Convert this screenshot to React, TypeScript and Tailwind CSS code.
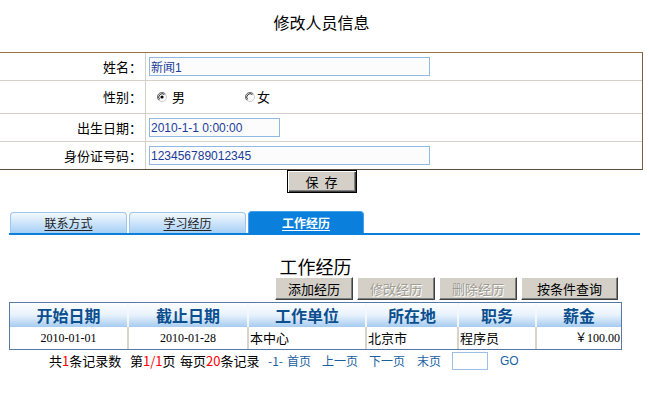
import React from 'react'

const cjk = "[font-family:'Noto_Sans_CJK_SC',sans-serif]"

function Radio({ checked }: { checked?: boolean }) {
  return (
    <svg width="10" height="10" viewBox="0 0 10 10" className="shrink-0">
      <circle cx="5" cy="5" r="4.5" fill="#fff" stroke="#c8c8c8" />
      <path d="M8.2 1.8 A4.5 4.5 0 0 0 1.8 8.2" fill="none" stroke="#707070" />
      <path d="M7.4 2.6 A3.4 3.4 0 0 0 2.6 7.4" fill="none" stroke="#303030" />
      {checked ? <circle cx="5" cy="5" r="1.6" fill="#000" /> : null}
    </svg>
  )
}

function FormRow({
  label,
  children,
  h,
  last,
}: {
  label: string
  children: React.ReactNode
  h: string
  last?: boolean
}) {
  return (
    <div className={`flex ${h} ${last ? '' : 'border-b border-[#d4d0c8]'}`}>
      <div className="w-[146px] shrink-0 border-r border-[#d4d0c8] flex items-center justify-end pr-[3px] text-[13px] text-black">
        {label}
      </div>
      <div className="flex-1 flex items-center pl-[3px]">{children}</div>
    </div>
  )
}

function TextBox({ value, w }: { value: string; w: string }) {
  return (
    <input
      readOnly
      value={value}
      className={`${w} h-[19px] border border-[#8fb9e3] bg-[#fcfcfc] px-[1px] text-[12px] text-[#1a3d99] outline-none [font-family:'Liberation_Sans','Noto_Sans_CJK_SC',sans-serif]`}
    />
  )
}

function OldButton({
  children,
  w,
  disabled,
}: {
  children: React.ReactNode
  w: string
  disabled?: boolean
}) {
  return (
    <button
      type="button"
      className={`${w} h-[23px] bg-[#d4d0c8] border border-t-white border-l-white border-r-[#404040] border-b-[#404040] shadow-[inset_-1px_-1px_0_#808080] flex items-center justify-center text-[13px] leading-none ${
        disabled ? 'text-[#a09c94] [text-shadow:1px_1px_0_#fff]' : 'text-black'
      }`}
    >
      {children}
    </button>
  )
}

const columns = ['开始日期', '截止日期', '工作单位', '所在地', '职务', '薪金']

export default function App() {
  return (
    <div className={`w-[649px] h-[409px] bg-white overflow-hidden ${cjk}`}>
      <div className="w-[643px] h-[52px] pt-[12px] text-center text-[16px] leading-[20px] text-black">
        修改人员信息
      </div>

      <div className="w-[643px] border-t border-b border-r border-t-[#9a7447] border-b-[#5e4c3a] border-r-[#7b5e40]">
        <FormRow label="姓名：" h="h-[28px]">
          <TextBox value="新闻1" w="w-[281px]" />
        </FormRow>
        <FormRow label="性别：" h="h-[33px]">
          <label className="ml-[8px] flex items-center gap-[5px] text-[13px]">
            <Radio checked />
            男
          </label>
          <label className="ml-[60px] flex items-center gap-[2px] text-[13px]">
            <Radio />
            女
          </label>
        </FormRow>
        <FormRow label="出生日期：" h="h-[28px]">
          <TextBox value="2010-1-1 0:00:00" w="w-[131px]" />
        </FormRow>
        <FormRow label="身份证号码：" h="h-[27px]" last>
          <TextBox value="123456789012345" w="w-[281px]" />
        </FormRow>
      </div>

      <div className="w-[643px]">
        <button
          type="button"
          className="mx-auto block w-[70px] h-[23px] bg-[#d4d0c8] border border-black shadow-[inset_1px_1px_0_#fff,inset_-1px_-1px_0_#404040,inset_-2px_-2px_0_#808080] text-[13px] leading-none tracking-[6px] pl-[6px]"
        >
          保存
        </button>
      </div>

      <div className="mt-[18px] ml-[9px] w-[631px] h-[24px] flex items-end border-b-2 border-[#0a7fdc]">
        <div className="ml-[1px] w-[117px] h-[21px] rounded-t-[4px] border border-b-0 border-[#9cc6ee] bg-linear-to-b from-[#f4f9fe] to-[#a6cff5] flex items-center justify-center text-[12px] text-[#222] underline underline-offset-2">
          联系方式
        </div>
        <div className="ml-[2px] w-[117px] h-[21px] rounded-t-[4px] border border-b-0 border-[#9cc6ee] bg-linear-to-b from-[#f4f9fe] to-[#a6cff5] flex items-center justify-center text-[12px] text-[#222] underline underline-offset-2">
          学习经历
        </div>
        <div className="ml-[2px] w-[116px] h-[22px] rounded-t-[4px] border border-b-0 border-[#4aa0e8] bg-[#0a7fdc] flex items-center justify-center text-[12px] font-bold text-white underline underline-offset-2">
          工作经历
        </div>
      </div>

      <div className="ml-[9px] w-[613px]">
        <div className="mt-[21px] h-[21px] text-center text-[18px] leading-[21px] text-black">工作经历</div>

        <div className="flex justify-end gap-[4px] pr-[4px]">
          <OldButton w="w-[78px]">添加经历</OldButton>
          <OldButton w="w-[78px]" disabled>
            修改经历
          </OldButton>
          <OldButton w="w-[78px]" disabled>
            删除经历
          </OldButton>
          <OldButton w="w-[97px]">按条件查询</OldButton>
        </div>

        <div className="mt-[2px] border border-[#5879a8]">
          <div className="grid grid-cols-[117px_120px_118px_92px_78px_86px] h-[24px] bg-linear-to-b from-[#fdfeff] via-[#e8f2fc] to-[#a6ccf0]">
            {columns.map((c, i) => (
              <div
                key={c}
                className={`flex items-center justify-center text-[16px] font-bold text-[#0c4f8e] ${
                  i > 0 ? 'border-l-2 border-[#f4f8fc]' : ''
                }`}
              >
                {c}
              </div>
            ))}
          </div>
          <div className="grid grid-cols-[117px_120px_118px_92px_78px_86px] h-[22px] text-[13px] text-black">
            <div className="flex items-center justify-center text-[12px] [font-family:'Liberation_Serif',serif]">
              2010-01-01
            </div>
            <div className="flex items-center justify-center border-l-2 border-[#d8d4cc] text-[12px] [font-family:'Liberation_Serif',serif]">
              2010-01-28
            </div>
            <div className="flex items-center pl-[1px] border-l-2 border-[#d8d4cc]">本中心</div>
            <div className="flex items-center pl-[1px] border-l-2 border-[#d8d4cc]">北京市</div>
            <div className="flex items-center pl-[1px] border-l-2 border-[#d8d4cc]">程序员</div>
            <div className="flex items-center justify-end pr-[1px] border-l-2 border-[#d8d4cc] text-[12px] [font-family:'Liberation_Serif','Noto_Sans_CJK_SC',serif]">
              ￥100.00
            </div>
          </div>
        </div>

        <div className="mt-[1px] h-[20px] flex items-center text-[13px] text-black whitespace-nowrap">
          <span className="ml-[40px] w-[81px]">
            共<span className="text-[#ff0000]">1</span>条记录数
          </span>
          <span className="w-[50px]">
            第<span className="text-[#ff0000]">1/1</span>页
          </span>
          <span className="w-[88px]">
            每页<span className="text-[#ff0000]">20</span>条记录
          </span>
          <span className="w-[19px] text-[12px] text-[#1a5f9f]">-1-</span>
          <span className="w-[35px] text-[12px] text-[#1a5f9f]">首页</span>
          <span className="w-[47px] text-[12px] text-[#1a5f9f]">上一页</span>
          <span className="w-[48px] text-[12px] text-[#1a5f9f]">下一页</span>
          <span className="w-[35px] text-[12px] text-[#1a5f9f]">末页</span>
          <input readOnly className="w-[36px] h-[18px] border border-[#9cc0e6] outline-none" />
          <span className="ml-[12px] text-[12px] text-[#1a5f9f] [font-family:'Liberation_Sans',sans-serif]">GO</span>
        </div>
      </div>
    </div>
  )
}
